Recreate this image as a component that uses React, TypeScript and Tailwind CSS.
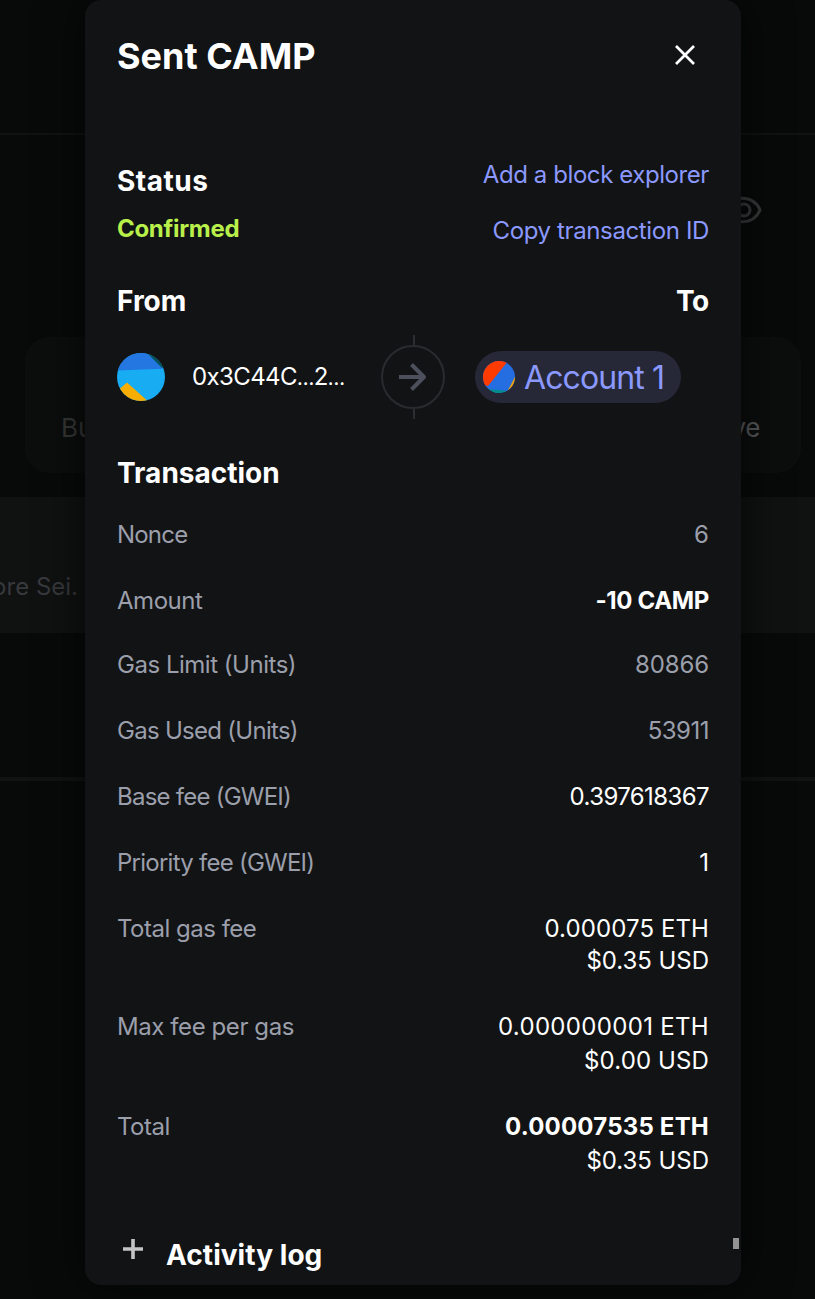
import type { ReactNode } from 'react';

type Value = { text: string; className: string };
type RowData = { label: string; labelClass: string; height: string; values: Value[] };

const rows: RowData[] = [
  { label: 'Nonce', labelClass: 'tracking-[-0.8px]', height: 'h-[66px]', values: [{ text: '6', className: 'text-[#9b9fab]' }] },
  { label: 'Amount', labelClass: 'tracking-[-0.45px]', height: 'h-[64px]', values: [{ text: '-10 CAMP', className: 'font-bold tracking-[-0.35px] text-white' }] },
  { label: 'Gas Limit (Units)', labelClass: 'tracking-[-0.48px]', height: 'h-[66px]', values: [{ text: '80866', className: 'tracking-[-0.1px] text-[#9b9fab]' }] },
  { label: 'Gas Used (Units)', labelClass: 'tracking-[-0.72px]', height: 'h-[66px]', values: [{ text: '53911', className: 'tracking-[-0.5px] text-[#9b9fab]' }] },
  { label: 'Base fee (GWEI)', labelClass: 'tracking-[-0.76px]', height: 'h-[66px]', values: [{ text: '0.397618367', className: 'tracking-[-0.6px] text-white' }] },
  { label: 'Priority fee (GWEI)', labelClass: 'tracking-[-0.75px]', height: 'h-[66px]', values: [{ text: '1', className: 'text-white' }] },
  {
    label: 'Total gas fee', labelClass: 'tracking-[-0.5px]', height: 'h-[98px]',
    values: [
      { text: '0.000075 ETH', className: 'tracking-[0.1px] text-white' },
      { text: '$0.35 USD', className: 'tracking-[-0.05px] text-white' },
    ],
  },
  {
    label: 'Max fee per gas', labelClass: 'tracking-[-0.42px]', height: 'h-[100px]',
    values: [
      { text: '0.000000001 ETH', className: 'tracking-[0.32px] text-white' },
      { text: '$0.00 USD', className: 'mt-0.5 tracking-[0.12px] text-white' },
    ],
  },
  {
    label: 'Total', labelClass: 'tracking-[-0.5px]', height: 'h-[124px]',
    values: [
      { text: '0.00007535 ETH', className: 'font-bold tracking-[0.2px] text-white' },
      { text: '$0.35 USD', className: 'mt-0.5 tracking-[-0.05px] text-white' },
    ],
  },
];

function Heading({ children, className }: { children: ReactNode; className: string }) {
  return <h2 className={`text-[28px] font-bold leading-10 text-white ${className}`}>{children}</h2>;
}

function Backdrop() {
  return (
    <div className="flex h-full flex-col">
      <div className="h-[133px] shrink-0" />
      <div className="h-0.5 shrink-0 bg-[#111212]" />
      <div className="flex h-[202px] shrink-0 items-start justify-end pr-[53px] pt-[60px]">
        <svg width="40" height="30" viewBox="0 0 40 30" fill="none" stroke="#38393b" strokeWidth="3">
          <path d="M2 15C5 7.500 12 3.300 20 3.300S35 7.500 38 15C35 22.500 28 26.700 20 26.700S5 22.500 2 15Z" />
          <circle cx="22" cy="15" r="6" />
        </svg>
      </div>
      <div className="ml-[25px] mr-[14px] flex h-[136px] shrink-0 items-start justify-between rounded-3xl bg-[#0c0d0d] pl-9 pr-[41px] pt-[72px] text-[26px] leading-[38px]">
        <span className="text-[#363737]">Buy</span>
        <span className="tracking-[-0.4px] text-[#58595a]">Receive</span>
      </div>
      <div className="mt-6 flex h-[136px] shrink-0 items-start bg-[#101111] pt-[74px]">
        <div className="flex w-[78px] justify-end">
          <span className="whitespace-nowrap text-[24px] leading-8 text-[#37393d]">Explore Sei.</span>
        </div>
      </div>
      <div className="h-[144px] shrink-0" />
      <div className="h-1 shrink-0 bg-[#111212]" />
    </div>
  );
}

function Modal() {
  return (
    <section className="flex h-[1285px] w-[656px] flex-col rounded-2xl bg-[#121315] px-8 shadow-[0_0_48px_rgba(0,0,0,0.7)]">
      <header className="flex h-[158px] items-start justify-between pr-[14px] pt-9">
        <h1 className="text-[36px] font-bold leading-10 text-white">Sent CAMP</h1>
        <svg className="mt-[9px]" width="20" height="20" viewBox="0 0 20 20" stroke="#fff" strokeWidth="2.700">
          <path d="M1 1L19 19M19 1L1 19" />
        </svg>
      </header>

      <div className="flex h-[123px] justify-between text-[24px] leading-8">
        <div className="flex flex-col pt-[3px]">
          <Heading className="tracking-[0.5px]">Status</Heading>
          <span className="mt-3 font-bold tracking-[-0.3px] text-[#b8ef4a]">Confirmed</span>
        </div>
        <div className="flex flex-col items-end gap-6 pt-px text-[#8b99ff]">
          <span className="tracking-[-0.42px]">Add a block explorer</span>
          <span className="tracking-[-0.37px]">Copy transaction ID</span>
        </div>
      </div>

      <div className="flex h-[54px] justify-between">
        <Heading className="">From</Heading>
        <Heading className="tracking-[-0.3px]">To</Heading>
      </div>

      <div className="flex h-[84px] items-center">
        <svg width="48" height="48" viewBox="0 0 48 48">
          <clipPath id="sender"><circle cx="24" cy="24" r="24" /></clipPath>
          <g clipPath="url(#sender)">
            <path fill="#18acf2" d="M0 0H48V48H0Z" />
            <path fill="#2476e1" d="M0 0H30L46 15.700L0 17.500Z" />
            <path fill="#03505a" d="M26 -4L45 15L52 12V-4Z" />
            <path fill="#f8ae00" d="M10 29.500L34 51L0 54V38Z" />
          </g>
        </svg>
        <span className="ml-[27px] w-[189px] pt-0.5 text-[24px] leading-8 tracking-[-0.6px] text-white">
          0x3C44C<span className="text-[19px] font-medium tracking-[-0.5px]">…</span>2<span className="text-[19px] font-medium">…</span>
        </span>
        <div className="flex w-16 flex-col items-center">
          <div className="ml-0.5 h-2.5 w-0.5 bg-[#2c2d31]" />
          <div className="flex size-16 items-center justify-center rounded-full border-2 border-[#2a2b2e]">
            <svg width="28" height="28" viewBox="0 0 28 28" fill="none" stroke="#4b505c" strokeWidth="4">
              <path d="M0 14H25M12.500 1.500L25 14L12.500 26.500" strokeLinejoin="round" />
            </svg>
          </div>
          <div className="ml-0.5 h-2.5 w-0.5 bg-[#2c2d31]" />
        </div>
        <div className="ml-[30px] flex h-[52px] w-[206px] items-center rounded-full bg-[#262838] pl-2">
          <svg width="32" height="32" viewBox="0 0 32 32">
            <clipPath id="recipient"><circle cx="16" cy="16" r="16" /></clipPath>
            <g clipPath="url(#recipient)">
              <path fill="#246ee1" d="M0 0H32V32H0Z" />
              <path fill="#ff3b02" d="M0 0H25L5 25L0 24Z" />
              <path fill="#018e8c" d="M0 27.500L25 30L23 34H0Z" />
              <path fill="#f4a100" d="M34 12L23 33H34Z" />
            </g>
          </svg>
          <span className="ml-[9px] pt-0.5 text-[32px] leading-[50px] tracking-[-0.9px] text-[#8b99ff]">Account 1</span>
        </div>
      </div>

      <Heading className="mt-[34px] h-[66px]">Transaction</Heading>

      <dl className="text-[24px] leading-8">
        {rows.map((row) => (
          <div key={row.label} className={`flex justify-between ${row.height}`}>
            <dt className={`text-[#9b9fab] ${row.labelClass}`}>{row.label}</dt>
            <dd className="flex flex-col items-end">
              {row.values.map((value) => (
                <span key={value.text} className={value.className}>{value.text}</span>
              ))}
            </dd>
          </div>
        ))}
      </dl>

      <div className="flex items-start pl-1.5">
        <svg className="mt-1" width="20" height="20" viewBox="0 0 20 20" stroke="#c4c4c5" strokeWidth="3.600">
          <path d="M0 10H20M10 0V20" />
        </svg>
        <Heading className="ml-[23px] tracking-[0.05px]">Activity log</Heading>
      </div>
    </section>
  );
}

export default function App() {
  return (
    <main className="relative h-[1299px] w-[815px] overflow-hidden bg-[#080909] font-['Inter',sans-serif]">
      <div className="absolute inset-0">
        <Backdrop />
      </div>
      <div className="relative pl-[85px]">
        <Modal />
        <div className="absolute left-[733px] top-[1238px] h-[11px] w-1.5 bg-[#939394]" />
      </div>
    </main>
  );
}
